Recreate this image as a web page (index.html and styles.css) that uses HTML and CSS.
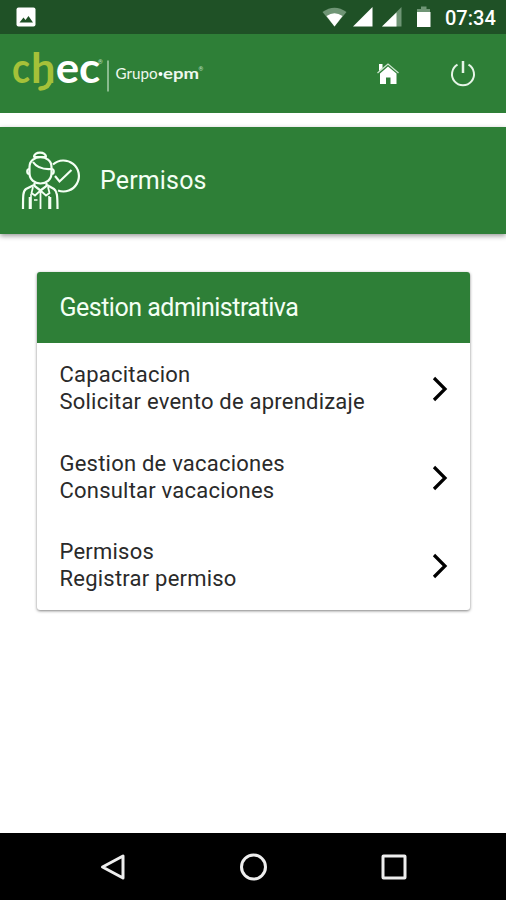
FILE: index.html
```html
<!DOCTYPE html>
<html lang="es">

<head>
    <meta charset="UTF-8">
    <meta name="viewport" content="width=device-width, initial-scale=1">
    <title>Permisos</title>
    <link rel="stylesheet" href="styles.css">
</head>

<body>

    <div class="statusbar">
        <svg class="picture" width="20" height="20" viewBox="0 0 20 20">
            <rect x="0.5" y="0.5" width="19" height="19" rx="2" fill="#fff" />
            <path d="M3.5 15.500L7.500 10.500L9.500 13L12.500 9L17 15.500Z" fill="#1f5126" />
        </svg>
        <svg width="111" height="24" viewBox="0 0 111 24">
            <path d="M0.500 7Q12.500 -1.500 24.500 7L12.500 21.500Z" fill="#6f9575" />
            <path d="M4.500 11Q12.500 5.500 20.500 11L12.500 21.500Z" fill="#fff" />
            <path d="M31 21.500H50.500V2Z" fill="#fff" />
            <path d="M60 21.500H79.500V2Z" fill="#6f9575" />
            <path d="M60 21.500H74.500V7.500Z" fill="#fff" />
            <path d="M99 1.500H104.500V4H108V8H95V4H99Z" fill="#6f9575" />
            <path d="M95 7H108.500V22H95Z" fill="#fff" />
        </svg>
        <span class="time">07:34</span>
    </div>

    <div class="header">
        <svg class="logo" width="194" height="70" viewBox="0 0 194 70">
            <g class="brand">
                <text x="0" y="43.500" fill="#a5c139" textLength="18" lengthAdjust="spacingAndGlyphs">c</text>
                <text x="19" y="43.500" fill="#a5c139" textLength="24.500" lengthAdjust="spacingAndGlyphs">h</text>
                <text x="43.700" y="43.500" fill="#fff" textLength="44.500" lengthAdjust="spacingAndGlyphs">ec</text>
            </g>
            <path d="M38.300 41C37.500 46 34 49 28.500 49.500" fill="none" stroke="#a5c139" stroke-width="4.500" stroke-linecap="round" />
            <text x="86" y="25" class="mark">®</text>
            <path d="M96 21.500V52.500" stroke="#a8cfac" stroke-width="1.500" />
            <text x="103.500" y="39.700" class="grupo" textLength="42" lengthAdjust="spacingAndGlyphs">Grupo</text>
            <circle cx="148.500" cy="35" r="2" fill="#fff" />
            <text x="151" y="39.700" class="epm" textLength="36" lengthAdjust="spacingAndGlyphs">epm</text>
            <text x="186.500" y="31.500" class="mark">®</text>
        </svg>
        <svg class="home" width="24" height="24" viewBox="0 0 24 24">
            <path d="M4 11.500L12 4.500L20.500 11.500V22H14.500V15.500H10V22H4Z" fill="#fff" />
            <path d="M1.500 11L12 2L22.500 11" fill="none" stroke="#cde5cf" stroke-width="1.300" />
            <path d="M3 2H6.500V6L3 9Z" fill="#fff" />
        </svg>
        <svg width="26" height="26" viewBox="0 0 26 26">
            <path d="M7.500 3.700A11 11 0 1 0 18.500 3.700" fill="none" stroke="#e6f5e7" stroke-width="2" />
            <path d="M13 0V12" stroke="#e6f5e7" stroke-width="2.500" />
        </svg>
    </div>

    <div class="title">
        <svg width="60" height="60" viewBox="0 0 60 60" fill="none" stroke="#f4fff4" stroke-width="2.200">
            <!-- check circle -->
            <path d="M32 13.500A15.500 15.500 0 1 1 37 39.500" />
            <path d="M34 25L38.500 30.500L50.500 19" />
            <!-- head -->
            <path d="M13 6.500C12 0 26 0 25 6.500M13 6H25" />
            <path d="M8.500 22V16C8.500 3 30.500 3 30.500 16V22C30.500 36 8.500 36 8.500 22Z" />
            <path d="M12 11C16 17 22 18.500 30 18" />
            <path d="M8.500 18C5.500 18 5.500 23 8.500 23M30.500 18C33.500 18 33.500 23 30.500 23" />
            <!-- jacket -->
            <path d="M13.500 32V35L19.500 39.500L25.500 35V32" />
            <path d="M13 34L5 38C2 40 2 44 2 58M26 34L33 38C36 40 36.500 44 36.500 58" />
            <path d="M12 36L10.500 42L14 44.500L19.500 39.500L25 44.500L28.500 42L27 36M19.500 40V58" stroke-width="1.800" />
            <path d="M8.500 58V46M29.500 58V46M10 43V58M13 49H16.500M28 45V58" stroke-width="1.600" />
        </svg>
        <h1>Permisos</h1>
    </div>

    <div class="card">
        <h2>Gestion administrativa</h2>
        <div class="row">
            <div class="text">
                <div>Capacitacion</div>
                <div>Solicitar evento de aprendizaje</div>
            </div>
            <svg width="16" height="26" viewBox="0 0 16 26"><path d="M2 2L13 13L2 24" /></svg>
        </div>
        <div class="row">
            <div class="text">
                <div>Gestion de vacaciones</div>
                <div>Consultar vacaciones</div>
            </div>
            <svg width="16" height="26" viewBox="0 0 16 26"><path d="M2 2L13 13L2 24" /></svg>
        </div>
        <div class="row">
            <div class="text">
                <div>Permisos</div>
                <div>Registrar permiso</div>
            </div>
            <svg width="16" height="26" viewBox="0 0 16 26"><path d="M2 2L13 13L2 24" /></svg>
        </div>
    </div>

    <div class="navbar">
        <svg width="28" height="28" viewBox="0 0 28 28"><path d="M3.500 14L24 3V25Z" /></svg>
        <svg width="28" height="28" viewBox="0 0 28 28"><circle cx="13.500" cy="14" r="12" /></svg>
        <svg width="28" height="28" viewBox="0 0 28 28"><rect x="3" y="3" width="22" height="22" rx="0.500" /></svg>
    </div>

</body>

</html>
```
FILE: styles.css
```css
* {
    box-sizing: border-box;
}

body {
    margin: 0;
    height: 900px;
    display: flex;
    flex-direction: column;
    overflow: hidden;
    background-color: #fff;
    font-family: Roboto, sans-serif;
}

svg {
    display: block;
    flex: none;
}

.statusbar {
    height: 34px;
    flex: none;
    display: flex;
    align-items: center;
    padding: 0 10px 0 16px;
    background-color: #1f5126;
    color: #fff;
}

.picture {
    margin-right: auto;
}

.time {
    width: 51px;
    margin-left: 12px;
    padding-top: 2px;
    font-size: 20px;
    font-weight: 500;
    white-space: nowrap;
}

.header {
    height: 79px;
    flex: none;
    display: flex;
    align-items: center;
    padding: 0 30px 0 12px;
    background-color: #2e7f37;
}

.logo {
    margin-right: auto;
}

.brand {
    font-family: Lato, sans-serif;
    font-size: 42px;
    font-weight: 700;
}

.grupo,
.epm {
    font-family: Lato, sans-serif;
    font-size: 16px;
    fill: #eef8ee;
}

.epm {
    font-weight: 700;
}

.mark {
    font-size: 6px;
    fill: #c5e0c7;
}

.home {
    margin-right: 50px;
}

.title {
    height: 107px;
    flex: none;
    display: flex;
    align-items: center;
    margin-top: 14px;
    padding-left: 21px;
    background-color: #2e7f37;
    box-shadow: 0 2px 5px rgba(0, 0, 0, 0.4);
}

h1 {
    margin: 0 0 0 19px;
    color: #f4fff4;
    font-size: 25px;
    font-weight: 400;
    letter-spacing: 0.15px;
}

/* Menu card */
.card {
    width: 433px;
    margin: 38px 0 0 37px;
    border-radius: 3px;
    overflow: hidden;
    background-color: #fff;
    box-shadow: 0 1px 3px rgba(0, 0, 0, 0.5);
}

h2 {
    height: 71px;
    margin: 0;
    padding-left: 22.5px;
    background-color: #2e7f37;
    color: #f4fff4;
    font-size: 25px;
    font-weight: 400;
    letter-spacing: -0.5px;
    line-height: 72px;
}

.row {
    height: 89px;
    display: flex;
    align-items: center;
    justify-content: space-between;
    padding: 2px 22px 0 22.5px;
}

.row:last-child {
    padding-top: 1px;
}

.text {
    color: #2a2a2a;
    font-size: 22px;
    font-weight: 400;
    line-height: 26.7px;
    letter-spacing: 0.22px;
    white-space: nowrap;
}

.row svg {
    fill: none;
    stroke: #000;
    stroke-width: 3.2;
}

/* Android buttons */
.navbar {
    height: 67px;
    flex: none;
    display: flex;
    align-items: center;
    justify-content: space-between;
    margin-top: auto;
    padding: 0 98px 0 99px;
    background-color: #000;
}

.navbar svg {
    fill: none;
    stroke: #eee;
    stroke-width: 3;
    stroke-linejoin: round;
}
```
